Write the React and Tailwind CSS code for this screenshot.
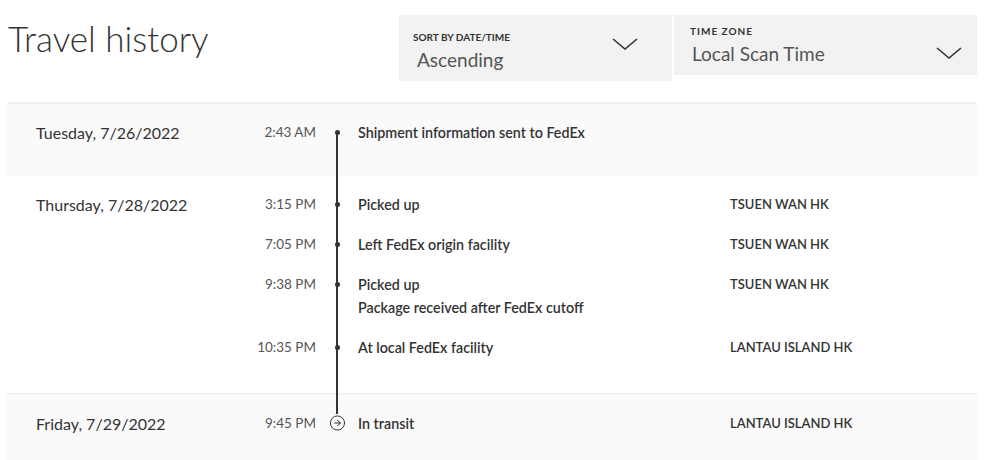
import { CircleArrowRight } from 'lucide-react'

const groups = [
  {
    date: 'Tuesday, 7/26/2022',
    shaded: true,
    events: [{ time: '2:43 AM', lines: ['Shipment information sent to FedEx'], place: '' }],
  },
  {
    date: 'Thursday, 7/28/2022',
    shaded: false,
    events: [
      { time: '3:15 PM', lines: ['Picked up'], place: 'TSUEN WAN HK' },
      { time: '7:05 PM', lines: ['Left FedEx origin facility'], place: 'TSUEN WAN HK' },
      { time: '9:38 PM', lines: ['Picked up', 'Package received after FedEx cutoff'], place: 'TSUEN WAN HK' },
      { time: '10:35 PM', lines: ['At local FedEx facility'], place: 'LANTAU ISLAND HK' },
    ],
  },
  {
    date: 'Friday, 7/29/2022',
    shaded: true,
    events: [{ time: '9:45 PM', lines: ['In transit'], place: 'LANTAU ISLAND HK', last: true }],
  },
]

function Chevron({ className }) {
  return (
    <svg className={className} width="26" height="12" viewBox="0 0 26 12" fill="none">
      <path d="M1 1 L13 11 L25 1" stroke="#333" strokeWidth="1.6" />
    </svg>
  )
}

function EventRow({ ev }) {
  return (
    <div className="flex leading-[23px]">
      <div className="w-[97px] text-right text-[13.5px] text-[#555]">{ev.time}</div>
      <div className="w-[42px] flex justify-center">
        {ev.last ? (
          <div className="mt-[2px] h-[17px] w-[17px] rounded-full bg-[#fafafa] relative z-10 flex items-center justify-center">
            <CircleArrowRight size={18} strokeWidth={1.4} color="#333" />
          </div>
        ) : (
          <div className="mt-[9px] h-[5px] w-[5px] rounded-full bg-[#333] relative z-10" />
        )}
      </div>
      <div className="w-[372px] text-[14.3px] font-semibold text-[#333]">
        {ev.lines.map((l) => (
          <div key={l}>{l}</div>
        ))}
      </div>
      <div className="text-[13px] font-semibold text-[#333]">{ev.place}</div>
    </div>
  )
}

export default function App() {
  return (
    <div className="w-[1000px] h-[460px] overflow-hidden bg-white font-['Lato',sans-serif] text-[#333]">
      {/* header */}
      <div className="h-[102px] flex items-start pt-[15px] pl-[7px]">
        <h1 className="w-[392px] pl-[1px] pt-[1px] text-[35px] font-light leading-[44px] text-[#333]">Travel history</h1>
        <div className="w-[273px] h-[66px] bg-[#f2f2f2] flex justify-between pl-[14px] pr-[34px]">
          <div className="pt-[16px]">
            <div className="text-[10px] font-bold leading-[12px] text-[#333]">SORT BY DATE/TIME</div>
            <div className="pl-[4px] pt-[3px] text-[19px] leading-[28px] text-[#555]">Ascending</div>
          </div>
          <Chevron className="mt-[23px]" />
        </div>
        <div className="ml-[2px] w-[303px] h-[60px] bg-[#f2f2f2] flex justify-between pl-[16px] pr-[15px]">
          <div className="pt-[10px]">
            <div className="text-[10px] font-bold tracking-[1px] leading-[12px] text-[#333]">TIME ZONE</div>
            <div className="pl-[2px] pt-[3px] text-[19px] leading-[28px] text-[#555]">Local Scan Time</div>
          </div>
          <Chevron className="mt-[32px]" />
        </div>
      </div>

      {/* timeline */}
      <div className="relative ml-[7px] w-[970px]">
        {groups.map((g) => (
          <div
            key={g.date}
            className={`flex pt-[17px] ${g.shaded ? 'pb-[32px] bg-[#fafafa] border-t-2 border-[#f2f2f2]' : 'pb-[34px] bg-white'}`}
          >
            <div className="w-[212px] pl-[29px] text-[16px] leading-[23px] text-[#333]">{g.date}</div>
            <div className="flex flex-col gap-[17px]">
              {g.events.map((ev) => (
                <EventRow key={ev.time} ev={ev} />
              ))}
            </div>
          </div>
        ))}
        <div className="absolute left-[329px] top-[29px] h-[283px] w-[2px] bg-[#333]" />
      </div>
    </div>
  )
}
